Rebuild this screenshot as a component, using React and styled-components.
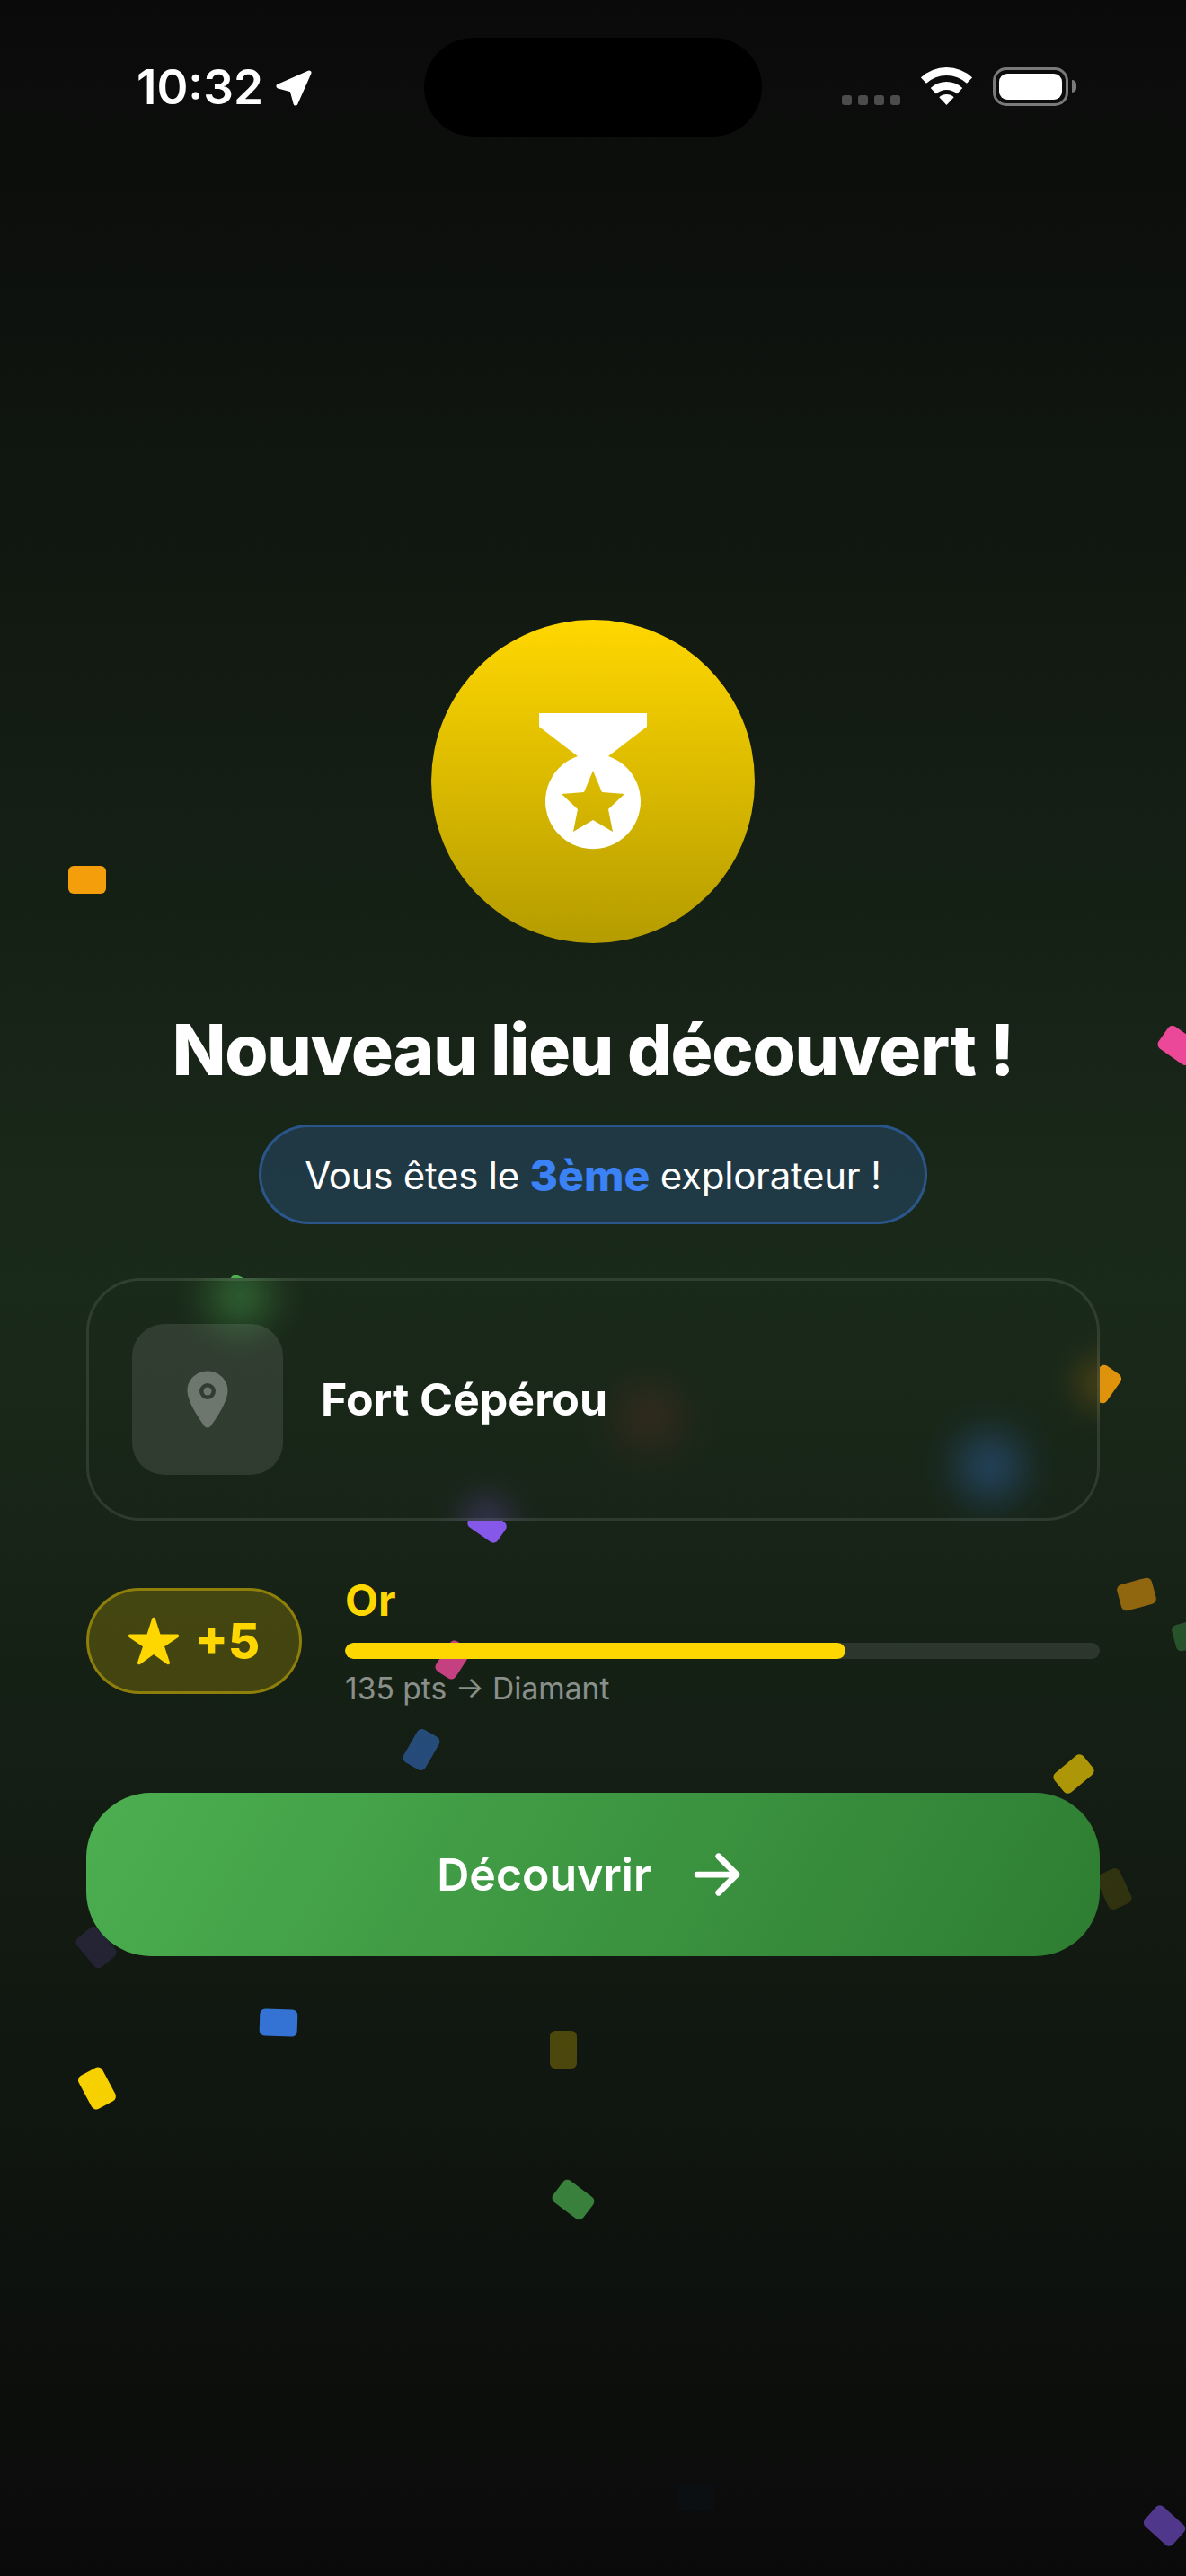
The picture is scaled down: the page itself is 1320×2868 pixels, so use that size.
import React from "react";
import styled, { createGlobalStyle } from "styled-components";
import { IoLocation, IoStar, IoArrowForward } from "react-icons/io5";

const GlobalStyle = createGlobalStyle`
  html, body {
    margin: 0;
    padding: 0;
    background: #0a0a0a;
  }
  * {
    box-sizing: border-box;
  }
`;

const Screen = styled.div`
  position: relative;
  width: 1320px;
  height: 2868px;
  overflow: hidden;
  background: linear-gradient(180deg, #0a0a0a 0%, #1a2a1a 50%, #0a0a0a 100%);
  font-family: Inter, "Liberation Sans", sans-serif;
  color: #ffffff;
`;

const StatusBar = styled.div`
  position: absolute;
  top: 0;
  left: 0;
  right: 0;
  z-index: 3;
  height: 160px;
  padding: 75px 131px 0 152px;
  display: flex;
  justify-content: space-between;
  align-items: flex-start;
`;

const Island = styled.div`
  position: absolute;
  top: 42px;
  left: 472px;
  width: 376px;
  height: 110px;
  border-radius: 55px;
  background: #000000;
`;

const TimeGroup = styled.div`
  display: flex;
  align-items: flex-start;
  gap: 14px;
`;

const Time = styled.span`
  font-size: 53px;
  font-weight: 600;
  line-height: 44px;
`;

const Indicators = styled.div`
  display: flex;
  align-items: flex-end;
  height: 43px;

  svg {
    align-self: flex-start;
  }
`;

const Signal = styled.div`
  display: flex;
  gap: 7px;
  margin: 0 23px 1px 0;
`;

const SignalDot = styled.span`
  width: 11px;
  height: 11px;
  border-radius: 3px;
  background: #4c4c4c;
`;

const Battery = styled.div`
  position: relative;
  width: 84px;
  height: 43px;
  margin-left: 23px;
  padding: 4px;
  border: 3px solid #7a7a7a;
  border-radius: 15px;

  &::after {
    content: "";
    position: absolute;
    top: 11px;
    right: -12px;
    width: 5px;
    height: 14px;
    border-radius: 0 5px 5px 0;
    background: #7a7a7a;
  }
`;

const BatteryLevel = styled.div`
  width: 100%;
  height: 100%;
  border-radius: 9px;
  background: #ffffff;
`;

const Confetti = styled.div`
  position: absolute;
  left: ${({ $x, $w }) => $x - $w / 2}px;
  top: ${({ $y, $h }) => $y - $h / 2}px;
  width: ${({ $w }) => $w}px;
  height: ${({ $h }) => $h}px;
  border-radius: 6px;
  background: ${({ $color }) => $color};
  opacity: ${({ $opacity }) => $opacity};
  transform: rotate(${({ $rot }) => $rot}deg);
`;

const Content = styled.main`
  position: relative;
  z-index: 1;
  height: 100%;
  padding: 0 96px;
  display: flex;
  flex-direction: column;
  align-items: center;
  justify-content: center;
`;

const Medal = styled.div`
  width: 360px;
  height: 360px;
  flex-shrink: 0;
  border-radius: 50%;
  background: linear-gradient(180deg, #ffd700 0%, #b59c00 100%);
  display: flex;
  align-items: center;
  justify-content: center;
`;

const Title = styled.h1`
  margin: 72px 0 36px;
  font-size: 78px;
  font-weight: 800;
  line-height: 94px;
  letter-spacing: -1.2px;
  white-space: nowrap;
`;

const RankPill = styled.div`
  height: 111px;
  padding: 2px 48px 0;
  display: flex;
  align-items: center;
  white-space: pre;
  font-size: 42px;
  font-weight: 400;
  letter-spacing: -0.25px;
  border: 3px solid rgba(59, 130, 246, 0.4);
  border-radius: 56px;
  background: rgba(59, 130, 246, 0.2);
`;

const Rank = styled.strong`
  font-size: 48px;
  font-weight: 800;
  letter-spacing: 0;
  color: #3b82f6;
`;

const glow = (x, y, r, rgb, a) =>
  `radial-gradient(circle ${r}px at ${x}px ${y}px,
    rgba(${rgb}, ${a}) 0%,
    rgba(${rgb}, ${a * 0.8}) 25%,
    rgba(${rgb}, ${a * 0.42}) 50%,
    rgba(${rgb}, ${a * 0.12}) 75%,
    rgba(${rgb}, 0) 100%)`;

const PlaceCard = styled.section`
  width: 100%;
  margin-top: 60px;
  padding: 48px;
  display: flex;
  align-items: center;
  gap: 42px;
  border: 3px solid rgba(255, 255, 255, 0.1);
  border-radius: 60px;
  background-origin: border-box;
  background-image:
    ${glow(171, 20, 72, "76, 175, 80", 0.36)},
    ${glow(627, 156, 78, "239, 68, 68", 0.1)},
    ${glow(1006, 210, 78, "59, 130, 246", 0.27)},
    ${glow(1130, 117, 60, "245, 158, 11", 0.17)},
    ${glow(446, 270, 60, "139, 92, 246", 0.2)},
    linear-gradient(180deg, #1a2a1a 0%, #172417 100%);
`;

const Thumb = styled.div`
  width: 168px;
  height: 168px;
  flex-shrink: 0;
  border-radius: 36px;
  background: rgba(255, 255, 255, 0.1);
  display: flex;
  align-items: center;
  justify-content: center;
  color: rgba(255, 255, 255, 0.3);
`;

const PlaceName = styled.div`
  font-size: 50px;
  font-weight: 700;
`;

const RewardRow = styled.div`
  width: 100%;
  margin-top: 60px;
  display: flex;
  align-items: center;
  gap: 48px;
`;

const PointsPill = styled.div`
  height: 118px;
  width: 240px;
  flex-shrink: 0;
  padding: 0 42px;
  display: flex;
  align-items: center;
  gap: 16px;
  color: #ffd700;
  font-size: 54px;
  font-weight: 800;
  border: 3px solid rgba(255, 215, 0, 0.4);
  border-radius: 59px;
  background: rgba(255, 215, 0, 0.2);
`;

const Level = styled.div`
  flex: 1;
  display: flex;
  flex-direction: column;
`;

const LevelName = styled.div`
  font-size: 48px;
  font-weight: 700;
  line-height: 58px;
  color: #ffd700;
`;

const Track = styled.div`
  height: 18px;
  margin-top: 18px;
  border-radius: 9px;
  background: rgba(255, 255, 255, 0.1);
  overflow: hidden;
`;

const Fill = styled.div`
  height: 100%;
  border-radius: 9px;
  background: #ffd700;
`;

const LevelHint = styled.div`
  margin-top: 13px;
  font-size: 33.6px;
  line-height: 40px;
  color: rgba(255, 255, 255, 0.5);
`;

const CtaButton = styled.button`
  width: 100%;
  height: 182px;
  flex-shrink: 0;
  margin-top: 96px;
  border: 0;
  border-radius: 72px;
  background: linear-gradient(120deg, #4caf50 0%, #2e7d32 100%);
  display: flex;
  align-items: center;
  justify-content: center;
  gap: 37px;
  font-family: inherit;
  font-size: 50px;
  font-weight: 600;
  color: #ffffff;
`;

// centre x/y in page pixels, read off the screen capture
const pieces = [
  { x: 97, y: 979, w: 42, h: 31, rot: 0, color: "#f59e0b", opacity: 1 },
  { x: 1312, y: 1164, w: 42, h: 30, rot: 35, color: "#ec4899", opacity: 1 },
  { x: 272, y: 1440, w: 42, h: 30, rot: 25, color: "#4caf50", opacity: 1 },
  { x: 1228, y: 1541, w: 38, h: 28, rot: -55, color: "#f59e0b", opacity: 0.9 },
  { x: 542, y: 1697, w: 40, h: 27, rot: 35, color: "#8b5cf6", opacity: 0.95 },
  { x: 504, y: 1848, w: 40, h: 26, rot: -57, color: "#ec4899", opacity: 0.82 },
  { x: 469, y: 1948, w: 42, h: 28, rot: -60, color: "#3b82f6", opacity: 0.45 },
  { x: 1265, y: 1775, w: 40, h: 30, rot: -15, color: "#f59e0b", opacity: 0.55 },
  { x: 1326, y: 1820, w: 40, h: 30, rot: -15, color: "#4caf50", opacity: 0.35 },
  { x: 1195, y: 1975, w: 42, h: 28, rot: -40, color: "#ffd700", opacity: 0.65 },
  { x: 1240, y: 2103, w: 42, h: 28, rot: 65, color: "#ffd700", opacity: 0.13 },
  { x: 107, y: 2168, w: 42, h: 30, rot: 50, color: "#8b5cf6", opacity: 0.15 },
  { x: 310, y: 2252, w: 42, h: 30, rot: 2, color: "#3b82f6", opacity: 0.85 },
  { x: 627, y: 2282, w: 30, h: 42, rot: 0, color: "#ffd700", opacity: 0.25 },
  { x: 108, y: 2325, w: 42, h: 30, rot: 62, color: "#ffd700", opacity: 0.97 },
  { x: 638, y: 2449, w: 42, h: 30, rot: 37, color: "#4caf50", opacity: 0.7 },
  { x: 774, y: 2781, w: 42, h: 30, rot: 0, color: "#3b82f6", opacity: 0.03 },
  { x: 1296, y: 2812, w: 42, h: 30, rot: 42, color: "#8b5cf6", opacity: 0.55 },
];

// one band of the wifi fan, centred on the bottom point
function wifiBand(outer, inner, deg) {
  const a = (deg * Math.PI) / 180;
  const cx = 28.5;
  const cy = 42;
  const dx = Math.sin(a);
  const dy = Math.cos(a);
  return `M${cx - outer * dx} ${cy - outer * dy}A${outer} ${outer} 0 0 1 ${cx + outer * dx} ${cy - outer * dy}L${cx + inner * dx} ${cy - inner * dy}A${inner} ${inner} 0 0 0 ${cx - inner * dx} ${cy - inner * dy}Z`;
}

const WifiIcon = () => (
  <svg width="57" height="42" viewBox="0 0 57 42" fill="#ffffff">
    <path d={wifiBand(42, 33, 43)} />
    <path d={wifiBand(26, 17, 43)} />
    <path d={wifiBand(12, 0, 43)} />
  </svg>
);

const LocationArrow = () => (
  <svg width="40" height="40" viewBox="0 0 40 40" style={{ marginTop: 3 }}>
    <path
      d="M37 3 L3 18 L18 22 L22 37 Z"
      fill="#ffffff"
      stroke="#ffffff"
      strokeWidth="5"
      strokeLinejoin="round"
    />
  </svg>
);

const MedalIcon = () => (
  <svg width="120" height="152" viewBox="0 0 120 152">
    <path
      fillRule="evenodd"
      fill="#ffffff"
      d="M0 0H120V15L77 48A53 53 0 1 1 43 48L0 15Z M60 64L50 88L25 90L43 107L38 132L60 119L82 132L77 107L95 90L70 88Z"
    />
  </svg>
);

export default function App() {
  return (
    <Screen>
      <GlobalStyle />
      {pieces.map((p, i) => (
        <Confetti
          key={i}
          $x={p.x}
          $y={p.y}
          $w={p.w}
          $h={p.h}
          $rot={p.rot}
          $color={p.color}
          $opacity={p.opacity}
        />
      ))}

      <StatusBar>
        <TimeGroup>
          <Time>10:32</Time>
          <LocationArrow />
        </TimeGroup>
        <Island />
        <Indicators>
          <Signal>
            <SignalDot />
            <SignalDot />
            <SignalDot />
            <SignalDot />
          </Signal>
          <WifiIcon />
          <Battery>
            <BatteryLevel />
          </Battery>
        </Indicators>
      </StatusBar>

      <Content>
        <Medal>
          <MedalIcon />
        </Medal>
        <Title>Nouveau lieu découvert !</Title>
        <RankPill>
          Vous êtes le <Rank>3ème</Rank> explorateur !
        </RankPill>
        <PlaceCard>
          <Thumb>
            <IoLocation size={72} />
          </Thumb>
          <PlaceName>Fort Cépérou</PlaceName>
        </PlaceCard>
        <RewardRow>
          <PointsPill>
            <IoStar size={60} />
            +5
          </PointsPill>
          <Level>
            <LevelName>Or</LevelName>
            <Track>
              <Fill style={{ width: `${(557 / 840) * 100}%` }} />
            </Track>
            <LevelHint>135 pts → Diamant</LevelHint>
          </Level>
        </RewardRow>
        <CtaButton>
          Découvrir
          <IoArrowForward size={72} />
        </CtaButton>
      </Content>
    </Screen>
  );
}
